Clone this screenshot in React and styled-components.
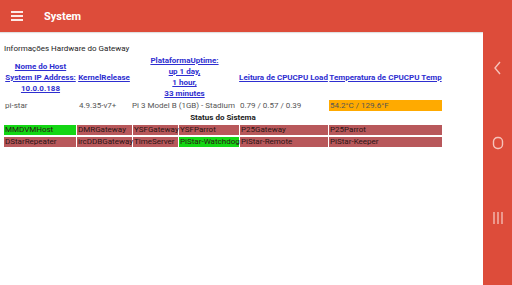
import styled, { createGlobalStyle } from "styled-components";

const GlobalStyle = createGlobalStyle`
  html, body {
    margin: 0;
    padding: 0;
    background: #fff;
    font-family: Roboto, "Liberation Sans", sans-serif;
  }
`;

const Screen = styled.div`
  display: flex;
  width: 512px;
  height: 285px;
  overflow: hidden;
  background: #dd4c3a;
`;

const Main = styled.div`
  display: flex;
  flex-direction: column;
  width: 483px;
  background: #fff;
`;

const Header = styled.div`
  display: flex;
  align-items: center;
  height: 32px;
  background: #dd4c3a;
  box-shadow: 0 1px 1px rgba(0, 0, 0, 0.12);
  color: #fff;
`;

const Burger = styled.div`
  display: flex;
  flex-direction: column;
  gap: 2px;
  width: 12px;
  margin-left: 11px;
  margin-right: 21px;

  span {
    display: block;
    height: 2px;
    background: #fde9e6;
  }
`;

const Title = styled.div`
  font-size: 11px;
  font-weight: 700;
`;

const Content = styled.div`
  padding: 11px 0 0 3px;
  color: #222;
  font-size: 8px;
`;

const Caption = styled.div`
  padding-left: 1px;
  line-height: 11px;
  margin-bottom: 0;
`;

const Table = styled.table`
  table-layout: fixed;
  border-collapse: separate;
  border-spacing: ${(p) => p.$spacing || "1px"};
  width: 440px;
  font-size: 8px;
  line-height: 11px;
`;

const Th = styled.th`
  font-weight: 700;
  text-align: center;
  vertical-align: middle;
  padding: 0;
  color: #2e2ed0;
  text-decoration: underline;
  white-space: ${(p) => (p.$nowrap ? "nowrap" : "normal")};
`;

const Td = styled.td`
  padding: 0 1px;
  color: #555;
  white-space: nowrap;
  text-align: left;
  background: ${(p) => p.$bg || "transparent"};
`;

const SectionTitle = styled.td`
  text-align: center;
  font-weight: 700;
  color: #222;
  padding: 0;
`;

const StatusTable = styled(Table)`
  margin-top: -1px;
`;

const Status = styled.td`
  padding: 0 0 0 1px;
  height: 10px;
  line-height: 10px;
  white-space: nowrap;
  color: #2a1515;
  background: ${(p) => (p.$on ? "#14d614" : "#b8585b")};
`;

const NavBar = styled.div`
  flex: 1;
  display: flex;
  flex-direction: column;
  align-items: center;
  justify-content: space-around;
  padding: 30px 0 29px;
  background: #dd4c3a;
`;

const NavIcon = styled.svg`
  display: block;
`;

const status = [
  [
    ["MMDVMHost", true],
    ["DMRGateway"],
    ["YSFGateway"],
    ["YSFParrot"],
    ["P25Gateway"],
    ["P25Parrot"],
  ],
  [
    ["DStarRepeater"],
    ["ircDDBGateway"],
    ["TimeServer"],
    ["PiStar-Watchdog", true],
    ["PiStar-Remote"],
    ["PiStar-Keeper"],
  ],
];

const App = () => {
  return (
    <Screen>
      <GlobalStyle />
      <Main>
        <Header>
          <Burger>
            <span />
            <span />
            <span />
          </Burger>
          <Title>System</Title>
        </Header>
        <Content>
          <Caption>Informações Hardware do Gateway</Caption>
          <Table>
            <colgroup>
              <col style={{ width: 73 }} />
              <col style={{ width: 52 }} />
              <col style={{ width: 107 }} />
              <col style={{ width: 89 }} />
              <col style={{ width: 113 }} />
            </colgroup>
            <tbody>
              <tr>
                <Th>
                  Nome do Host
                  <br />
                  System IP Address:
                  <br />
                  10.0.0.188
                </Th>
                <Th>KernelRelease</Th>
                <Th>
                  PlataformaUptime:
                  <br />
                  up 1 day,
                  <br />
                  1 hour,
                  <br />
                  33 minutes
                </Th>
                <Th $nowrap>Leitura de CPUCPU Load</Th>
                <Th $nowrap>Temperatura de CPUCPU Temp</Th>
              </tr>
              <tr>
                <Td>pi-star</Td>
                <Td>4.9.35-v7+</Td>
                <Td>Pi 3 Model B (1GB) - Stadium</Td>
                <Td>0.79 / 0.57 / 0.39</Td>
                <Td $bg="#ffaa00">54.2°C / 129.6°F</Td>
              </tr>
              <tr>
                <SectionTitle colSpan={5}>Status do Sistema</SectionTitle>
              </tr>
            </tbody>
          </Table>
          <StatusTable $spacing="1px 2px">
            <colgroup>
              <col style={{ width: 72 }} />
              <col style={{ width: 55 }} />
              <col style={{ width: 45 }} />
              <col style={{ width: 60 }} />
              <col style={{ width: 88 }} />
              <col style={{ width: 113 }} />
            </colgroup>
            <tbody>
              {status.map((row, i) => (
                <tr key={i}>
                  {row.map(([name, on]) => (
                    <Status key={name} $on={on}>
                      {name}
                    </Status>
                  ))}
                </tr>
              ))}
            </tbody>
          </StatusTable>
        </Content>
      </Main>
      <NavBar>
        <NavIcon width="10" height="14" viewBox="0 0 10 14">
          <path d="M7 1 L2 7 L7 13" fill="none" stroke="#f6c3bb" strokeWidth="1.4" />
        </NavIcon>
        <NavIcon width="12" height="14" viewBox="0 0 12 14">
          <rect x="1.5" y="1.5" width="9" height="11" rx="4" fill="none" stroke="#f6c3bb" strokeWidth="1.4" />
        </NavIcon>
        <NavIcon width="12" height="14" viewBox="0 0 12 14">
          <path d="M2 1 V13 M6 1 V13 M10 1 V13" stroke="#f6c3bb" strokeWidth="1.3" />
        </NavIcon>
      </NavBar>
    </Screen>
  );
};

export default App;
